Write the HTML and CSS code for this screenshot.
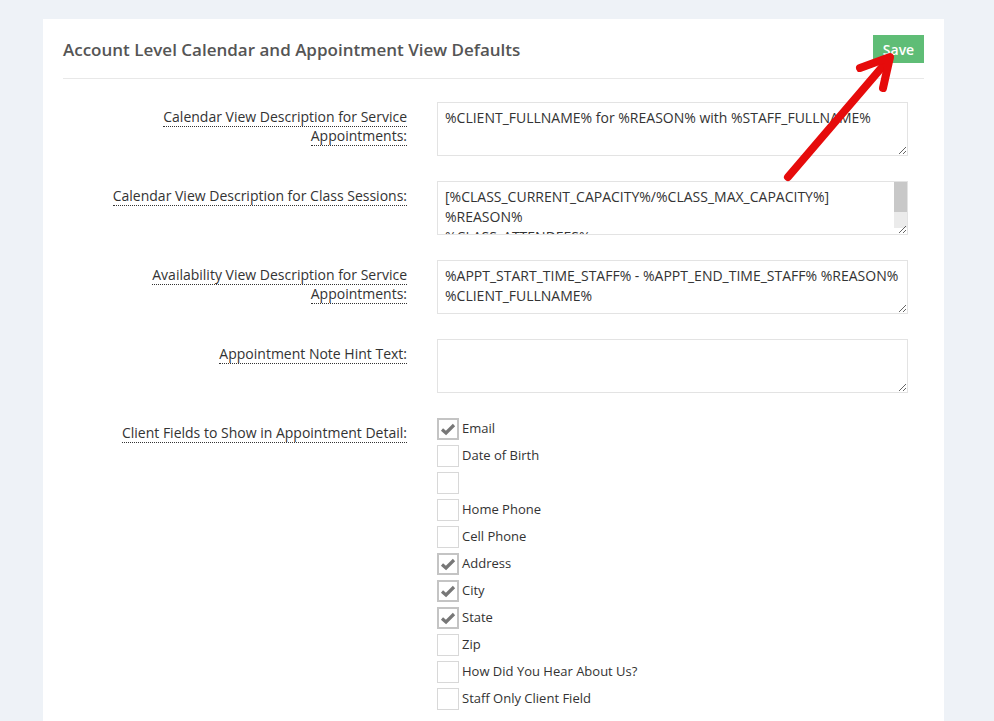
FILE: index.html
```html
<!DOCTYPE html>
<html lang="en">
<head>
    <meta charset="UTF-8" />
    <title>Calendar Settings</title>
    <link rel="stylesheet" href="styles.css">
</head>
<body>
    <div class="panel">
        <div class="panel-header">
            <h2>Account Level Calendar and Appointment View Defaults</h2>
            <button class="btn-save">Save</button>
        </div>

        <div class="form-row">
            <label class="field-label"><span>Calendar View Description for Service Appointments:</span></label>
            <textarea>%CLIENT_FULLNAME% for %REASON% with %STAFF_FULLNAME%</textarea>
        </div>

        <div class="form-row">
            <label class="field-label"><span>Calendar View Description for Class Sessions:</span></label>
            <textarea class="scrolled">[%CLASS_CURRENT_CAPACITY%/%CLASS_MAX_CAPACITY%]
%REASON%
%CLASS_ATTENDEES%
%STAFF_FULLNAME%</textarea>
        </div>

        <div class="form-row">
            <label class="field-label"><span>Availability View Description for Service Appointments:</span></label>
            <textarea>%APPT_START_TIME_STAFF% - %APPT_END_TIME_STAFF% %REASON% %CLIENT_FULLNAME%</textarea>
        </div>

        <div class="form-row">
            <label class="field-label"><span>Appointment Note Hint Text:</span></label>
            <textarea></textarea>
        </div>

        <div class="form-row">
            <label class="field-label"><span>Client Fields to Show in Appointment Detail:</span></label>
            <div class="check-list">
                <label class="check"><input type="checkbox" checked><i></i>Email</label>
                <label class="check"><input type="checkbox"><i></i>Date of Birth</label>
                <label class="check"><input type="checkbox"><i></i></label>
                <label class="check"><input type="checkbox"><i></i>Home Phone</label>
                <label class="check"><input type="checkbox"><i></i>Cell Phone</label>
                <label class="check"><input type="checkbox" checked><i></i>Address</label>
                <label class="check"><input type="checkbox" checked><i></i>City</label>
                <label class="check"><input type="checkbox" checked><i></i>State</label>
                <label class="check"><input type="checkbox"><i></i>Zip</label>
                <label class="check"><input type="checkbox"><i></i>How Did You Hear About Us?</label>
                <label class="check"><input type="checkbox"><i></i>Staff Only Client Field</label>
            </div>
        </div>
    </div>

    <!-- pointer at the save button -->
    <svg class="pointer" width="994" height="721" viewBox="0 0 994 721">
        <g stroke="#e60b0b" stroke-width="8" stroke-linecap="round" stroke-linejoin="round" fill="none">
            <path d="M788 177 L889 59" />
            <path d="M860 68 L890 57 L883 88" />
        </g>
    </svg>
</body>
</html>
```

FILE: styles.css
```css
body {
    font-family: "Open Sans", "Liberation Sans", sans-serif;
    margin: 0;
    padding: 19px 50px 0 43px;
    background-color: #eef2f7;
    color: #333;
    font-size: 14px;
}

.panel {
    background-color: white;
    padding: 0 20px 40px 20px;
    min-height: 720px;
}

.panel-header {
    display: flex;
    justify-content: space-between;
    align-items: center;
    height: 59px;
    border-bottom: 1px solid #e8e8e8;
    margin-bottom: 23px;
}

    .panel-header h2 {
        margin: 0;
        font-size: 17px;
        font-weight: 600;
        color: #555;
        padding-top: 1px;
    }

.btn-save {
    font-family: inherit;
    font-size: 14px;
    font-weight: 600;
    color: white;
    background-color: #5fbd76;
    border: none;
    height: 28px;
    width: 51px;
    padding: 0;
    margin-top: 1px;
    cursor: pointer;
}

.form-row {
    display: grid;
    grid-template-columns: 344px 471px;
    column-gap: 30px;
    margin-bottom: 25px;
}

.field-label {
    text-align: right;
    line-height: 19px;
    padding-top: 5px;
    padding-left: 40px;
}

    .field-label span {
        border-bottom: 1px dotted #333;
    }

textarea {
    font-family: inherit;
    font-size: 14px;
    color: #333;
    line-height: 20px;
    height: 54px;
    box-sizing: border-box;
    padding: 5px 7px;
    border: 1px solid #e3e3e3;
    resize: vertical;
    outline: none;
    overflow: hidden;
}

    /* drawn scroll bar for the overflowing field */
    textarea.scrolled {
        padding-right: 20px;
        background:
            linear-gradient(#c8c8c8, #c8c8c8) right top / 13px 30px no-repeat,
            linear-gradient(#ebebeb, #ebebeb) right top / 13px 46px no-repeat,
            white;
    }

.check-list {
    display: flex;
    flex-direction: column;
    gap: 5px;
}

.check {
    display: flex;
    align-items: flex-start;
    font-size: 13px;
    line-height: 20px;
    height: 22px;
}

    .check input {
        display: none;
    }

    .check i {
        width: 22px;
        height: 22px;
        box-sizing: border-box;
        border: 1px solid #d8d8d8;
        margin-right: 3px;
        flex: none;
    }

    .check input:checked + i {
        border: 2px solid #c4c4c4;
        background: url("data:image/svg+xml;utf8,<svg xmlns='http://www.w3.org/2000/svg' width='18' height='18'><path d='M3 9.5 L7 13 L15 5' stroke='%23777' stroke-width='3.2' fill='none'/></svg>") no-repeat center;
    }

.pointer {
    position: absolute;
    left: 0;
    top: 0;
    pointer-events: none;
}
```
